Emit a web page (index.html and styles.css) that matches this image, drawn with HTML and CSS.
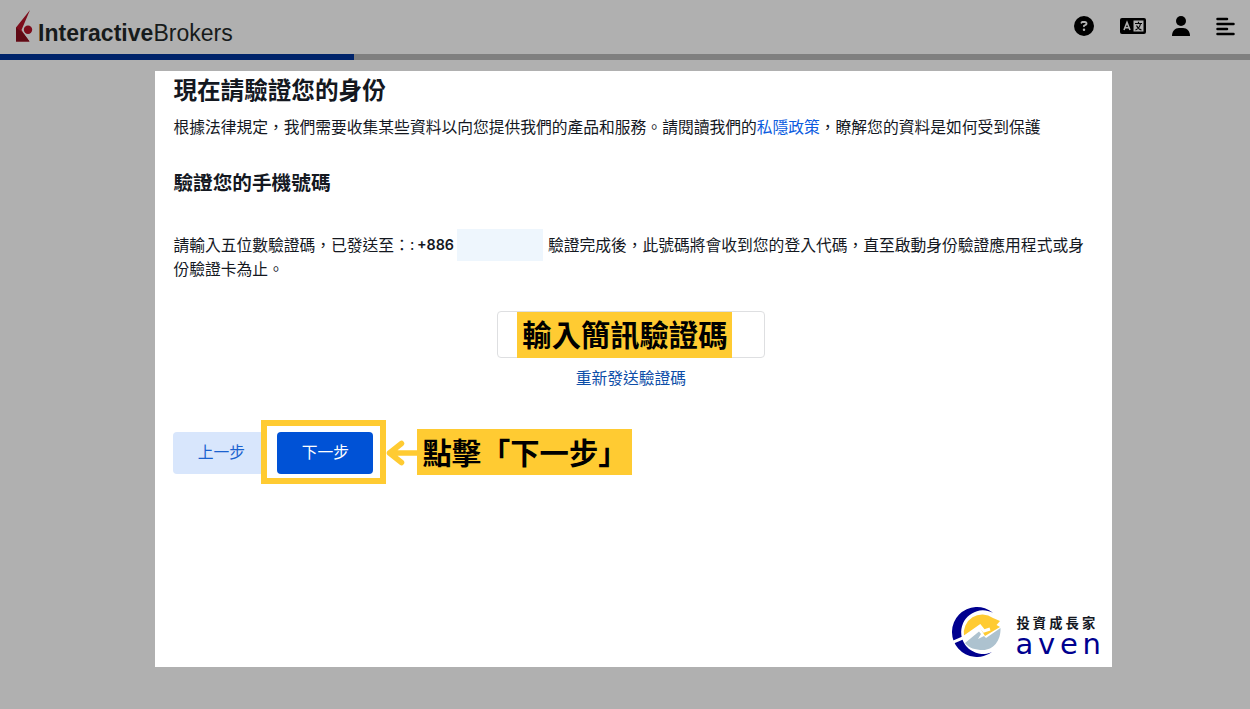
FILE: index.html
```html
<!DOCTYPE html>
<html lang="zh-Hant">
<head>
<meta charset="utf-8">
<title>Interactive Brokers</title>
<link rel="stylesheet" href="styles.css">
</head>
<body>
<header class="header">
  <div class="brand">
    <svg class="brand-mark" width="18" height="32" viewBox="0 0 18 32"><path d="M15 0 1 17.500V31.500H14.500L9 24 6.500 20Z" fill="#7d0d1c"/><path d="M1 17.500 9 24 14.500 31.500H1Z" fill="#5f0a15"/><circle cx="13" cy="19.800" r="4.200" fill="#7d0d1c"/></svg>
    <span class="brand-name"><b>Interactive</b>Brokers</span>
  </div>
  <nav class="tools">
    <svg class="help" width="20" height="20" viewBox="0 0 512 512"><path d="M256 0a256 256 0 1 0 0 512 256 256 0 1 0 0-512zM170 165c8-22 29-37 53-37h58c35 0 63 28 63 63 0 22-12 43-31 54l-33 19c0 13-11 24-24 24s-24-11-24-24v-14c0-9 5-17 12-21l45-25c5-3 7-8 7-13 0-9-7-15-15-15h-58c-3 0-7 2-8 5-4 13-18 19-31 15-12-4-18-18-14-31zm54 187a32 32 0 1 1 64 0 32 32 0 1 1-64 0z"/></svg>
    <svg class="language" width="26" height="16" viewBox="0 0 26 16"><rect width="26" height="16" rx="2"/><path d="M4 12 7 4.500 10 12M5 9.700H9" fill="none" stroke="#b0b0b0" stroke-width="1.600"/><path d="M13.500 2.500H23.500V13.500H13.500Z" fill="#b0b0b0"/><path d="M15 5.500H22M18.500 3.800V5.500M20.500 5.500C20 8.500 18 11 15.500 12M16.500 7.500C17.500 9.500 19.500 11.500 21.500 12" fill="none" stroke="#000" stroke-width="1.200"/></svg>
    <svg class="user" width="18" height="20" viewBox="0 0 18 20"><circle cx="9" cy="5" r="5"/><path d="M0 20C0 15 3 12 7 12H11C15 12 18 15 18 20Z"/></svg>
    <svg class="menu" width="19" height="19" viewBox="0 0 19 19"><path d="M1.500 2H11M1.500 7H17.500M1.500 12H11M1.500 17H17.500" fill="none" stroke="#000" stroke-width="2.500" stroke-linecap="round"/></svg>
  </nav>
</header>
<div class="progress"><div class="progress-fill"></div></div>
<main class="card">
  <h1 class="title">現在請驗證您的身份</h1>
  <p class="intro">根據法律規定，我們需要收集某些資料以向您提供我們的產品和服務。請閱讀我們的<a class="policy">私隱政策</a>，瞭解您的資料是如何受到保護</p>
  <h2 class="subtitle">驗證您的手機號碼</h2>
  <div class="notice">
    <div class="notice-line"><span>請輸入五位數驗證碼，已發送至：</span><span class="colon">:</span><b class="phone">+886</b><span class="redacted"></span><span>驗證完成後，此號碼將會收到您的登入代碼，直至啟動身份驗證應用程式或身</span></div>
    <div class="notice-line">份驗證卡為止。</div>
  </div>
  <div class="code">
    <div class="code-input"><span class="label">輸入簡訊驗證碼</span></div>
    <a class="resend">重新發送驗證碼</a>
  </div>
  <div class="actions">
    <div class="back">上一步</div>
    <div class="highlight"><div class="next">下一步</div></div>
    <svg class="arrow" width="31" height="26" viewBox="0 0 31 26"><path d="M15.500 3.500 3.500 13 15.500 22.500M3.500 13H31" fill="none" stroke="#ffcb32" stroke-width="5.500" stroke-linecap="round" stroke-linejoin="round"/></svg>
    <span class="label hint">點擊「下一步<span class="bracket">」</span></span>
  </div>
  <footer class="sponsor">
    <svg class="sponsor-mark" width="50" height="50" viewBox="0 0 50 50"><path d="M41 5.800A25 25 0 1 0 40 45A21.800 21.800 0 1 1 41 5.800Z" fill="#00008f"/><path d="M12 29A18.500 18.500 0 0 1 41 11L48 14 44.500 18 48 20 33 29 27 19Z" fill="#ffcb32"/><path d="M0 35.500 11 31 28 19 32 24 38 22" fill="none" stroke="#fff" stroke-width="3"/><path d="M13 36 27 24.500 29 27 26 32 32 29 34 31 48.500 21C49 34 41 43 31 43 23 43 17 41 13 36Z" fill="#adc2cf"/></svg>
    <div class="sponsor-text"><span class="sponsor-name">投資成長家</span><span class="sponsor-latin">aven</span></div>
  </footer>
</main>
</body>
</html>
```
FILE: styles.css
```css
* { box-sizing: border-box; }
body {
  margin: 0;
  height: 709px;
  overflow: hidden;
  background: #b0b0b0;
  color: #14181f;
  font-family: "Noto Sans CJK TC", sans-serif;
}
h1, h2, p { margin: 0; }
svg { flex: none; }
.header {
  display: flex;
  justify-content: space-between;
  height: 54px;
  padding: 10px 15px 0 15px;
}
.brand { display: flex; gap: 5px; }
.brand-name {
  padding-top: 10px;
  font: 23px/26px "Liberation Sans", sans-serif;
  letter-spacing: 0.030px;
  color: #171b1b;
}
.tools { display: flex; align-items: center; height: 32px; }
.help { margin-right: 26px; }
.language { margin-right: 26px; }
.user { margin-right: 26px; }
.progress { height: 6px; background: #7f7f7f; }
.progress-fill { width: 354px; height: 6px; background: #00246b; }
.card {
  display: flex;
  flex-direction: column;
  width: 957px;
  height: 596px;
  margin: 11px 0 0 155.400px;
  padding: 0 18px;
  background: #fff;
}
.title { font-size: 23.600px; line-height: 36px; }
.intro { margin-top: 8px; font-size: 15.770px; line-height: 24px; white-space: nowrap; }
.policy { color: #0b5ce0; }
.subtitle { margin-top: 28px; font-size: 19.650px; line-height: 30px; }
.notice { margin-top: 32px; font-size: 15.770px; }
.notice-line { display: flex; align-items: center; height: 24px; line-height: 24px; white-space: nowrap; }
.notice-line:first-child { height: 32px; margin-bottom: -4px; }
.colon { width: 7px; font: 15px/24px Inter, sans-serif; }
.phone { width: 36px; font: 600 14.300px/24px Inter, sans-serif; }
.redacted {
  width: 86px;
  height: 32px;
  margin: 0 5px 0 4px;
  background: #eef6fd;
}
.code { display: flex; flex-direction: column; align-items: center; width: 915px; margin-top: 30px; }
.code-input {
  display: flex;
  justify-content: center;
  align-items: center;
  width: 268px;
  height: 47px;
  padding-right: 12px;
  border: 1px solid #dedfe1;
  border-radius: 4px;
}
.label {
  height: 46px;
  padding: 0 5px;
  background: #ffcb32;
  color: #000;
  font-size: 29.300px;
  font-weight: 700;
  line-height: 43px;
  white-space: nowrap;
}
.resend { margin-top: 8px; font-size: 15.770px; line-height: 24px; color: #0c4da8; }
.actions { display: flex; align-items: center; height: 64px; margin-top: 30px; }
.back {
  width: 94px;
  height: 42px;
  margin: 2px -6px 0 0;
  padding-left: 2px;
  border-radius: 4px;
  background: #d8e6fc;
  color: #1a62cf;
  font-size: 15.770px;
  line-height: 39px;
  text-align: center;
}
.highlight { width: 125px; height: 64px; padding: 6px 10px; border: 6px solid #ffcb32; }
.next {
  width: 96px;
  height: 42px;
  border-radius: 4px;
  background: #0052d6;
  color: #fff;
  font-size: 15.770px;
  line-height: 39px;
  text-align: center;
}
.arrow { margin-top: 1px; }
.hint { width: 215px; line-height: 45px; }
.bracket { font-family: "Noto Sans CJK JP", sans-serif; }
.sponsor { display: flex; gap: 13px; margin: auto 0 10px 779px; }
.sponsor-text { display: flex; flex-direction: column; padding-top: 6px; }
.sponsor-name { padding-left: 1px; font-size: 13.300px; font-weight: 700; line-height: 20px; letter-spacing: 3.100px; white-space: nowrap; }
.sponsor-latin { font: 29px/23px "DejaVu Sans", sans-serif; letter-spacing: 4.800px; color: #00008f; }
```
